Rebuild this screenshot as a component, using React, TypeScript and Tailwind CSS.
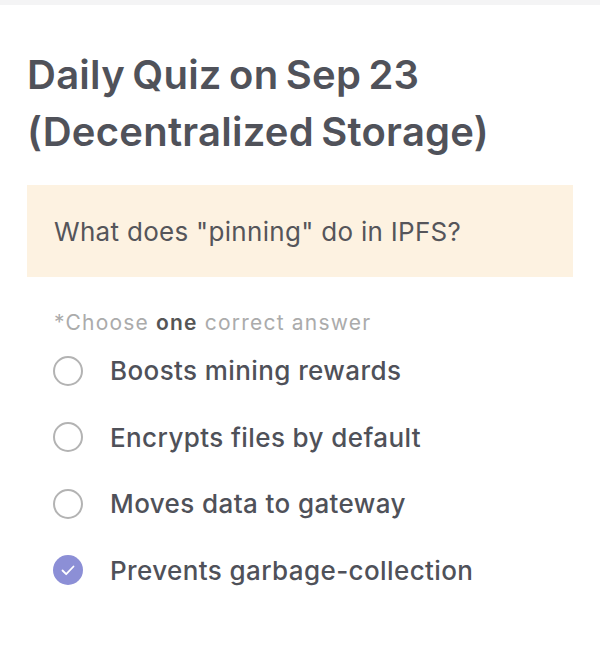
import React from "react";

const options = [
    "Boosts mining rewards",
    "Encrypts files by default",
    "Moves data to gateway",
    "Prevents garbage-collection",
];

export default function App() {
    const selected = 3;
    return (
        <div className="w-[600px] h-[646px] bg-white font-['Inter',sans-serif] overflow-hidden">
            <div className="h-[5px] bg-[#f4f4f5]"></div>
            <div className="px-[27px] pt-[41px]">
                <h1 className="text-[40px] leading-[57px] font-semibold text-[#50525a] tracking-[0.25px] [word-spacing:-3px]">
                    Daily Quiz on Sep 23
                    <br />
                    (Decentralized Storage)
                </h1>
                <div className="mt-[25px] h-[92px] bg-[#fdf2e1] flex items-center px-[27px]">
                    <p className="text-[26px] text-[#55555a] tracking-[0.3px]">What does "pinning" do in IPFS?</p>
                </div>
                <p className="mt-[30px] pl-[27px] text-[21px] text-[#ababab] tracking-[1.2px]">
                    *Choose <span className="font-semibold text-[#555]">one</span> correct answer
                </p>
                <ul className="-mt-[1px]">
                    {options.map((opt, i) => (
                        <li key={i} className="h-[66.5px] flex items-center pl-[26px]">
                            {i === selected ? (
                                <svg width="30" height="30" viewBox="0 0 30 30" fill="none">
                                    <circle cx="15" cy="15" r="15" fill="#8c8fd6" />
                                    <path d="M9.5 15.5l3.7 3.7L20.5 11.5" stroke="white" strokeWidth="1.8" strokeLinecap="round" strokeLinejoin="round" />
                                </svg>
                            ) : (
                                <span className="w-[30px] h-[30px] rounded-full border-[2px] border-[#b3b3b3]"></span>
                            )}
                            <span className="ml-[27px] text-[26px] font-medium text-[#4f5159] tracking-[0.4px]">{opt}</span>
                        </li>
                    ))}
                </ul>
            </div>
        </div>
    );
}
